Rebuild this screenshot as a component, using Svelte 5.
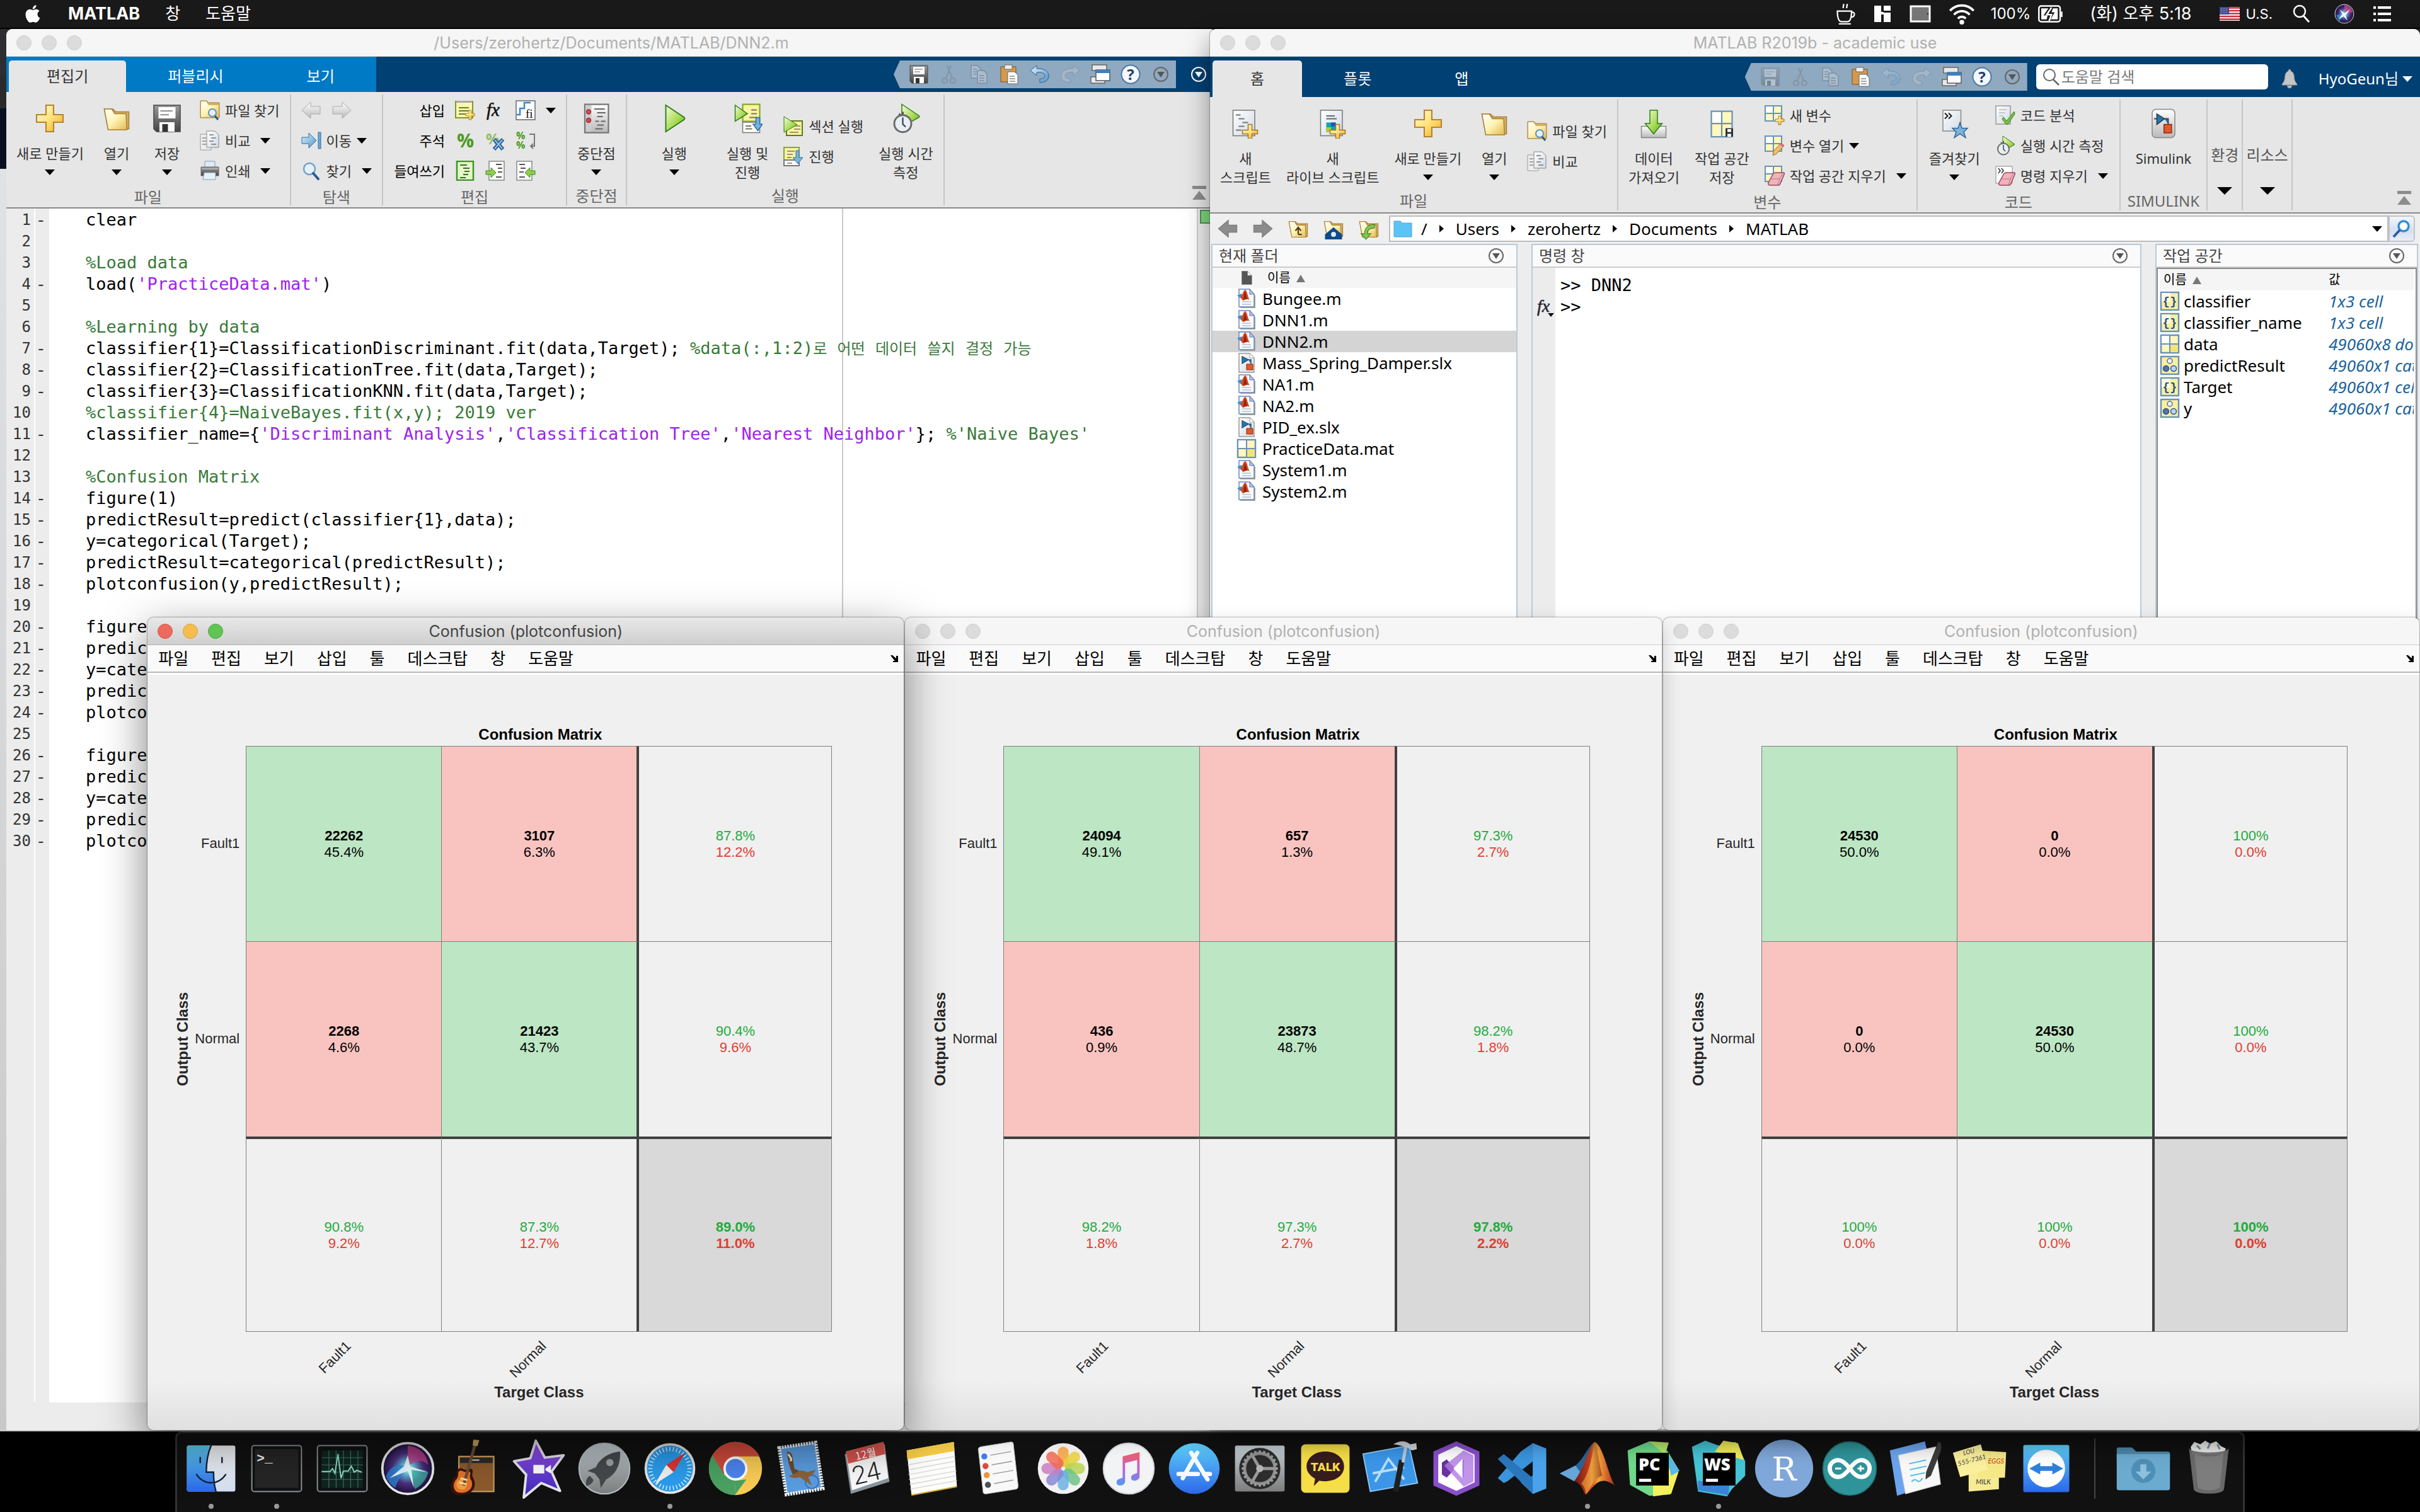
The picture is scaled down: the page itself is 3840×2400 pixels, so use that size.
<script>
  const source = [
    'clear',
    '',
    '%Load data',
    "load('PracticeData.mat')",
    '',
    '%Learning by data',
    'classifier{1}=ClassificationDiscriminant.fit(data,Target); %data(:,1:2)로 어떤 데이터 쓸지 결정 가능',
    'classifier{2}=ClassificationTree.fit(data,Target);',
    'classifier{3}=ClassificationKNN.fit(data,Target);',
    '%classifier{4}=NaiveBayes.fit(x,y); 2019 ver',
    "classifier_name={'Discriminant Analysis','Classification Tree','Nearest Neighbor'}; %'Naive Bayes'",
    '',
    '%Confusion Matrix',
    'figure(1)',
    'predictResult=predict(classifier{1},data);',
    'y=categorical(Target);',
    'predictResult=categorical(predictResult);',
    'plotconfusion(y,predictResult);',
    '',
    'figure(2)',
    'predictResult=predict(classifier{2},data);',
    'y=categorical(Target);',
    'predictResult=categorical(predictResult);',
    'plotconfusion(y,predictResult);',
    '',
    'figure(3)',
    'predictResult=predict(classifier{3},data);',
    'y=categorical(Target);',
    'predictResult=categorical(predictResult);',
    'plotconfusion(y,predictResult);'
  ];

  // Splits one line of MATLAB code into plain, string and comment runs.
  function tokens(line) {
    const out = [];
    for (const part of line.split(/('[^']*'|%.*)/)) {
      if (!part) continue;
      if (part[0] === '%') {
        for (const run of part.split(/([가-힣]+)/)) {
          if (run) out.push({ kind: /[가-힣]/.test(run) ? 'comment hangul' : 'comment', text: run });
        }
      } else if (part[0] === "'") out.push({ kind: 'string', text: part });
      else out.push({ kind: 'plain', text: part });
    }
    return out;
  }

  const code = source.map((line, i) => ({
    number: i + 1,
    runs: line !== '' && line[0] !== '%',
    parts: tokens(line)
  }));

  const files = [
    ['Bungee.m', 'mfile'], ['DNN1.m', 'mfile'], ['DNN2.m', 'mfile'], ['Mass_Spring_Damper.slx', 'slx'],
    ['NA1.m', 'mfile'], ['NA2.m', 'mfile'], ['PID_ex.slx', 'slx'], ['PracticeData.mat', 'matrix'],
    ['System1.m', 'mfile'], ['System2.m', 'mfile']
  ];

  const variables = [
    ['classifier', '1x3 cell', 'cell'], ['classifier_name', '1x3 cell', 'cell'], ['data', '49060x8 double', 'matrix'],
    ['predictResult', '49060x1 categorical', 'cat'], ['Target', '49060x1 cell', 'cell'], ['y', '49060x1 categorical', 'cat']
  ];

  const figures = [
    [[['22262', '45.4%'], ['3107', '6.3%'], ['87.8%', '12.2%']],
     [['2268', '4.6%'], ['21423', '43.7%'], ['90.4%', '9.6%']],
     [['90.8%', '9.2%'], ['87.3%', '12.7%'], ['89.0%', '11.0%']]],
    [[['24094', '49.1%'], ['657', '1.3%'], ['97.3%', '2.7%']],
     [['436', '0.9%'], ['23873', '48.7%'], ['98.2%', '1.8%']],
     [['98.2%', '1.8%'], ['97.3%', '2.7%'], ['97.8%', '2.2%']]],
    [[['24530', '50.0%'], ['0', '0.0%'], ['100%', '0.0%']],
     [['0', '0.0%'], ['24530', '50.0%'], ['100%', '0.0%']],
     [['100%', '0.0%'], ['100%', '0.0%'], ['100%', '0.0%']]]
  ];

  const classes = ['Fault1', 'Normal', ''];
  const figureMenus = ['파일', '편집', '보기', '삽입', '툴', '데스크탑', '창', '도움말'];

  function cellKind(r, c) {
    if (r === 2 && c === 2) return 'rate total';
    if (r === 2 || c === 2) return 'rate';
    return r === c ? 'hit' : 'miss';
  }

  const dock = [
    ['finder', true], ['terminal', true], ['activity'], ['siri'], ['garage'], ['imovie'], ['launchpad'], ['safari', true],
    ['chrome'], ['mail'], ['calendar'], ['notes'], ['reminders'], ['photos'], ['music'], ['appstore'], ['settings'],
    ['talk'], ['xcode'], ['vs'], ['vscode'], ['matlab', true], ['pycharm'], ['webstorm', true], ['rstudio'],
    ['arduino'], ['textedit'], ['stickies'], ['teamviewer']
  ];

  const quickEditor = [['save'], ['cut', 1], ['copy', 1], ['paste'], ['undo'], ['redo', 1], ['windows'], ['help'], ['circledown']];
  const quickMain = [['save', 1], ['cut', 1], ['copy', 1], ['paste'], ['undo', 1], ['redo', 1], ['windows'], ['help'], ['circledown']];
  const crumbs = ['Users', 'zerohertz', 'Documents', 'MATLAB'];
  const rays = Array.from({ length: 36 }, (_, i) => i * 10);
  const teeth = Array.from({ length: 24 }, (_, i) => i * 15);
  const petals = ['#f5a13c', '#e8d13a', '#b9d452', '#6dc487', '#6ab1e4', '#8c86d6', '#c77fc0', '#ee6a52'];
</script>

{#snippet ic(name, cls = 's32')}
  <svg class="ic {cls}" viewBox="0 0 32 32" aria-hidden="true"><use href="#{name}" /></svg>
{/snippet}

{#snippet dn()}
  <svg class="dn" viewBox="0 0 16 9" aria-hidden="true"><path d="M0 0h16L8 9z" /></svg>
{/snippet}

{#snippet big(icon, lines, arrow, cls = '')}
  <button class="big {cls}">
    {@render ic(icon, 's48')}
    {#each lines as l}<span>{l}</span>{/each}
    {#if arrow}<span class="drop">{@render dn()}</span>{/if}
  </button>
{/snippet}

{#snippet small(icon, text, arrow)}
  <button class="small">
    {@render ic(icon)}<span>{text}</span>
    {#if arrow}<span class={arrow}>{@render dn()}</span>{/if}
  </button>
{/snippet}

{#snippet lights(cls = '')}
  <div class="lights {cls}">
    <button aria-label="닫기"></button><button aria-label="최소화"></button><button aria-label="확대"></button>
  </div>
{/snippet}

{#snippet quick(items)}
  <div class="quick">
    {#each items as [name, off]}
      <button class={off ? 'off' : ''} disabled={!!off} aria-label={name}>{@render ic(name)}</button>
    {/each}
  </div>
{/snippet}

<svg class="sprite" aria-hidden="true">
  <defs>
    <linearGradient id="gold" x2="1" y2="1"><stop offset="0" stop-color="#fffbe0" /><stop offset=".5" stop-color="#ffe37a" /><stop offset="1" stop-color="#e8a92a" /></linearGradient>
    <linearGradient id="cream" x2="1" y2="1"><stop offset="0" stop-color="#fff" /><stop offset=".5" stop-color="#fdf3b4" /><stop offset="1" stop-color="#e3b951" /></linearGradient>
    <linearGradient id="lime" x2="1" y2="1"><stop offset="0" stop-color="#f4fcd8" /><stop offset=".6" stop-color="#a5d94e" /><stop offset="1" stop-color="#55a02a" /></linearGradient>
    <linearGradient id="sky" x2="1" y2="1"><stop offset="0" stop-color="#e3f1fb" /><stop offset="1" stop-color="#4b93c8" /></linearGradient>
    <linearGradient id="paper" x2="1" y2="1"><stop offset="0" stop-color="#fff" /><stop offset="1" stop-color="#cfdae4" /></linearGradient>
    <linearGradient id="steel" x2="0" y2="1"><stop offset="0" stop-color="#9a9a9a" /><stop offset="1" stop-color="#444" /></linearGradient>
    <linearGradient id="silver" x2="0" y2="1"><stop offset="0" stop-color="#fff" /><stop offset="1" stop-color="#b9b9b9" /></linearGradient>

    <path id="plus" d="M12 2h8v10h10v8H20v10h-8V20H2v-8h10z" fill="url(#gold)" stroke="#b9832a" stroke-width="1.4" />
    <g id="folder"><path d="M3 6h9l3 3h14v18H7z" fill="#d6b069" stroke="#a87f35" /><path d="M3 6h8l3 5h12l1 17H7z" fill="url(#cream)" stroke="#a87f35" /></g>
    <g id="save"><path d="M2 2h28v28H5l-3-3z" fill="url(#steel)" stroke="#444" /><path d="M7 4h18v12H7z" fill="#fff" /><path d="M9 8h13M9 12h9" stroke="#999" stroke-width="1.5" /><path d="M8 20h16v10H8z" fill="#fff" /><path d="M11 22h6v8h-6z" fill="#333" /></g>
    <g id="lens"><circle cx="13" cy="13" r="9" fill="#e4f1fa" fill-opacity=".9" stroke="#6fa3cc" stroke-width="2.5" /><path d="M19 20l8 9" stroke="#285a8c" stroke-width="4" stroke-linecap="round" /></g>
    <g id="findfiles"><path d="M1 1h10l3 3h17v24H1z" fill="#d9b264" stroke="#a87f35" /><path d="M2 2h8l4 6h16v19H2z" fill="url(#cream)" /><circle cx="20" cy="20" r="6" fill="#e4f1fa" stroke="#5b93c3" stroke-width="2" /><path d="M24 25l5 6" stroke="#285a8c" stroke-width="3" /></g>
    <g id="compare"><path d="M1 6h17v25H1z" fill="#eee" stroke="#999" /><path d="M4 12h6M4 17h6M4 22h6" stroke="#888" stroke-width="1.5" /><path d="M11 1h13l6 6v20H11z" fill="url(#paper)" stroke="#888" /><path d="M15 7h7M18 12h8M15 17h7M18 22h8" stroke="#777" stroke-width="1.5" /></g>
    <g id="print"><path d="M8 1h16v10H8z" fill="#dfeaf4" stroke="#7f9cb8" /><path d="M2 10h28v14H2z" fill="url(#steel)" stroke="#666" /><path d="M3 13h26" stroke="#ddd" /><path d="M7 19h18v11H5z" fill="#e6f1fa" stroke="#7f9cb8" /></g>
    <path id="left" d="M1 16L15 3v7h15v12H15v7z" fill="url(#silver)" stroke="#aaa" />
    <path id="right" d="M31 16L17 3v7H2v12h15v7z" fill="url(#silver)" stroke="#aaa" />
    <path id="backdark" d="M3 16L17 4v7h12v10H17v7z" fill="#8c8c8c" stroke="#7a7a7a" />
    <path id="fwddark" d="M29 16L15 4v7H3v10h12v7z" fill="#8c8c8c" stroke="#7a7a7a" />
    <g id="goto"><path d="M1 11h11V4l12 12-12 12v-7H1z" fill="url(#sky)" stroke="#2f6ea4" /><path d="M27 3h4v26h-4z" fill="#6fa9d6" stroke="#2f6ea4" /></g>
    <g id="insert"><path d="M1 2h27v26H1z" fill="#fbf7b0" stroke="#7a9c2a" stroke-width="2" /><path d="M2 1h25v3H2z" fill="#a8a8a8" /><path d="M6 12h16M6 17h18M6 22h11" stroke="#6b7c2a" stroke-width="2" /><path d="M22 16h4v5h5v4h-5v6h-4v-6h-5v-4h5z" fill="url(#gold)" stroke="#b9832a" /></g>
    <text id="fx" x="2" y="25" font-family="Liberation Serif, serif" font-style="italic" font-size="29" fill="#111" stroke="#111" stroke-width=".6">fx</text>
    <g id="fi"><path d="M1 1h30v30H1z" fill="#fff" stroke="#667" stroke-width="1.5" /><path d="M2 23h5V13h7V4h10" stroke="#3b86d0" stroke-width="2.5" fill="none" /><text x="16" y="28" font-family="Liberation Serif, serif" font-size="19" fill="#111">fi</text></g>
    <text id="pct" x="3" y="27" font-family="Open Sans, sans-serif" font-weight="700" font-size="30" fill="#4b9a1e">%</text>
    <g id="pctx"><text x="1" y="22" font-family="Open Sans, sans-serif" font-weight="700" font-size="24" fill="#8fc06a">%</text><path d="M14 14l14 16M28 14L14 30" stroke="#2d5f9e" stroke-width="6" /><path d="M15 15l12 14M27 15L15 29" stroke="#8fc0e8" stroke-width="2" /></g>
    <g id="pctwrap" font-family="Open Sans, sans-serif" font-weight="700" font-size="16" fill="#4b9a1e"><text x="1" y="14">%</text><text x="1" y="29">%</text><path d="M22 6h8v19h-6m4-4l-4 4 4 4" fill="none" stroke="#777" stroke-width="2" /></g>
    <g id="smart"><path d="M3 1h26v30H3z" fill="#e3f7c8" stroke="#3f9427" stroke-width="2.5" /><path d="M8 7h11M13 12h10M15 17h8M13 22h8M8 27h9" stroke="#446a2a" stroke-width="2" /></g>
    <g id="indent"><path d="M6 1h24v30H6z" fill="#fff" stroke="#888" stroke-width="1.5" /><path d="M17 6h9M20 12h7M20 18h7M17 26h9" stroke="#555" stroke-width="2" /><path d="M1 16h8v-5l8 8-8 8v-5H1z" fill="#8fce4a" stroke="#3c8a20" /></g>
    <g id="outdent"><path d="M2 1h24v30H2z" fill="#fff" stroke="#888" stroke-width="1.5" /><path d="M6 6h9M8 12h8M6 18h7M6 26h9" stroke="#555" stroke-width="2" /><path d="M31 16h-8v-5l-8 8 8 8v-5h8z" fill="#8fce4a" stroke="#3c8a20" /></g>
    <g id="break"><path d="M4 1h25v30H4z" fill="url(#silver)" stroke="#777" stroke-width="1.5" /><path d="M5 2h6v28H5z" fill="#ccc" /><circle cx="8" cy="9" r="2.3" fill="#d94b52" stroke="#9e2a30" /><circle cx="8" cy="18" r="2.3" fill="#d94b52" stroke="#9e2a30" /><path d="M14 6h11M17 10h9M17 14h6M15 19h4M21 19h5M17 23h7M15 27h8" stroke="#666" stroke-width="1.3" /></g>
    <path id="run" d="M7 2l19 12.500q2 1.500 0 3L7 30z" fill="url(#lime)" stroke="#2e7d1e" stroke-width="1.300" />
    <g id="runadv"><path d="M11 1h18v18H11z" fill="#fbf3a0" stroke="#86a82c" stroke-width="1.500" /><path d="M11 20h18v11H11z" fill="#fff" stroke="#777" /><path d="M20 7h6M20 11h6M18 15h8M14 24h6M14 27h7" stroke="#776" stroke-width="1.300" /><path d="M3 2l13 9L3 19z" fill="url(#lime)" stroke="#2e7d1e" /><path d="M25 15h4v7h3l-5 7-5-7h3z" fill="#77b3e0" stroke="#2f6ea4" /></g>
    <g id="runsec"><path d="M5 8h25v23H5z" fill="#fbf3a0" stroke="#5f7a1c" stroke-width="2" /><path d="M17 16h10M17 21h10M10 26h14" stroke="#776" stroke-width="1.500" /><path d="M1 1l21 13L1 26z" fill="url(#lime)" stroke="#2e7d1e" /></g>
    <g id="adv"><path d="M1 2h24v20H1z" fill="#fbf3a0" stroke="#86a82c" stroke-width="2" /><path d="M1 22h24v9H1z" fill="#fff" stroke="#777" stroke-width="2" /><path d="M6 8h12M6 13h9M6 18h7M6 27h8" stroke="#776" stroke-width="1.500" /><path d="M20 7h5v11h6l-8 10-8-10h5z" fill="#77b3e0" stroke="#2f6ea4" /></g>
    <g id="runtime"><path d="M12 1l18 12q1 1 0 2L12 25z" fill="url(#lime)" stroke="#2e7d1e" /><path d="M13 9v3M9 11l2 2" stroke="#555" stroke-width="2" /><circle cx="13" cy="21.500" r="9" fill="#e9eef2" stroke="#6b6b6b" stroke-width="2" /><path d="M13 15v7l3 3" fill="none" stroke="#345" stroke-width="1.500" /></g>
    <g id="cut" fill="none" stroke="#666" stroke-width="2"><path d="M19 2L11 22M13 2l8 20" /><circle cx="9" cy="26" r="4" /><circle cx="22" cy="26" r="4" /></g>
    <g id="copy" stroke="#555" stroke-width="1.500" fill="#e8edf2"><path d="M3 2h10l5 5v15H3z" /><path d="M13 10h10l5 5v15H13z" /><path d="M6 8h6M6 12h6M6 16h6M16 18h8M16 22h8M16 26h8" /></g>
    <g id="paste"><path d="M2 4h24v24H2z" fill="#d39a4e" stroke="#7a5320" /><path d="M8 1h12v7H8z" fill="#eee" stroke="#666" /><path d="M13 12h11l5 5v14H13z" fill="#fff" stroke="#666" /><path d="M16 19h8M16 23h9M16 27h9" stroke="#888" stroke-width="1.500" /></g>
    <path id="undo" d="M1 10L11 2v5c14-1 20 6 19 13-1 6-6 9-14 9v-6c6 0 8-2 8-5 0-4-5-6-13-5v5z" fill="url(#sky)" stroke="#2a6298" />
    <path id="redo" d="M31 10L21 2v5C7 6 1 13 2 20c1 6 6 9 14 9v-6c-6 0-8-2-8-5 0-4 5-6 13-5v5z" fill="#cfd8e0" stroke="#666" />
    <g id="windows"><path d="M3 1h23v9H3zM1 20h22v10H1z" fill="#e9e9e9" stroke="#666" stroke-width="1.500" /><path d="M9 9h22v17H9z" fill="#fff" stroke="#556" stroke-width="1.500" /><path d="M9 9h22v5H9z" fill="#3d80c4" /></g>
    <g id="help"><circle cx="16" cy="16" r="14.500" fill="#f4f8fc" stroke="#4b78a4" stroke-width="2" /><text x="16" y="25" text-anchor="middle" font-family="Open Sans, sans-serif" font-weight="700" font-size="24" fill="#1f3f66">?</text></g>
    <g id="circledown"><circle cx="16" cy="16" r="11" fill="none" stroke="#666" stroke-width="2" /><path d="M10 12h12l-6 9z" fill="#555" /></g>
    <g id="circlewhite"><circle cx="16" cy="16" r="11" fill="none" stroke="#fff" stroke-width="2" /><path d="M10 12h12l-6 9z" fill="#fff" /></g>
    <g id="newscript"><path d="M3 2h23v27H3z" fill="url(#paper)" stroke="#777" /><path d="M6 7h5M9 11h6M13 15h6M9 19h6M6 23h6" stroke="#777" stroke-width="1.200" /><path d="M19 17h4v6h6v4h-6v5h-4v-5h-6v-4h6z" fill="url(#gold)" stroke="#a8762a" /></g>
    <g id="newlive"><path d="M3 2h23v27H3z" fill="url(#paper)" stroke="#777" /><path d="M9 8h9M9 11h11" stroke="#666" stroke-width="1.200" /><path d="M9 15h10v10H9z" fill="#12a5a8" /><path d="M14 15h5v4h-5z" fill="#1b55c8" /><path d="M9 20h5v5H9z" fill="#b7c934" /><path d="M19 17h4v6h6v4h-6v5h-4v-5h-6v-4h6z" fill="url(#gold)" stroke="#a8762a" /></g>
    <g id="import"><path d="M3 19h26v12H3z" fill="url(#silver)" stroke="#888" /><path d="M12 2h8v14h5l-9 11-9-11h5z" fill="url(#lime)" stroke="#2e7d1e" /></g>
    <g id="matrix"><path d="M2 2h28v28H2z" fill="#fff7bd" stroke="#6993b5" stroke-width="2.500" /><path d="M3 3h13v13H3z" fill="#fff" /><path d="M16 16h13v13H16z" fill="#f7e17a" /><path d="M16 2v28M2 16h28" stroke="#6993b5" stroke-width="2" /></g>
    <g id="savews"><path d="M5 3h22v27H5z" fill="#fff7bd" stroke="#6993b5" stroke-width="1.500" /><path d="M6 4h10v12H6z" fill="#fff" /><path d="M16 3v27M5 16h22" stroke="#6993b5" stroke-width="1.500" /><path d="M20 21h8v9h-8z" fill="#333" /><path d="M22 22h4v3h-4zM22 27h4v3h-4z" fill="#fff" /></g>
    <g id="grid4"><path d="M1 1h26v24H1z" fill="#fff7bd" stroke="#6993b5" stroke-width="2" /><path d="M2 2h12v11H2z" fill="#fff" /><path d="M14 1v24M1 13h26" stroke="#6993b5" stroke-width="2" /></g>
    <g id="newvar"><use href="#grid4" /><path d="M22 17h4v5h5v4h-5v5h-4v-5h-5v-4h5z" fill="url(#gold)" stroke="#a8762a" /></g>
    <g id="openvar"><use href="#grid4" /><path d="M26 12l5 4-12 13-6 3 1-7z" fill="#f0bd6a" stroke="#a0692a" /><path d="M26 12l5 4-2 3-5-5z" fill="#d96a80" /></g>
    <g id="eraser"><path d="M18 11h12q2 0 1 3l-6 14q-1 3-3 3H8q-3 0-2-4l7-13q1-3 5-3z" fill="#eeb3bd" stroke="#9c4a5a" stroke-width="1.500" /><path d="M10 21h14l5-9M24 21l-3 9" fill="none" stroke="#c0707f" /></g>
    <g id="clearws"><use href="#grid4" /><use href="#eraser" /></g>
    <g id="cmdclear"><path d="M1 1h26v27H1z" fill="#fff" stroke="#888" /><path d="M5 4l3 4-3 4M10 4l3 4-3 4" stroke="#333" fill="none" stroke-width="1.500" /><use href="#eraser" /></g>
    <g id="fav"><path d="M4 2h19v22H4z" fill="url(#paper)" stroke="#888" /><path d="M6 5l3 3-3 3M10 5l3 3-3 3" stroke="#222" fill="none" stroke-width="1.400" /><path d="M22 15l2 6h6l-4 4 2 6-6-4-6 4 2-6-4-4h6z" fill="#7db4dd" stroke="#2f6797" /></g>
    <g id="analyze"><path d="M1 1h23v29H1z" fill="url(#paper)" stroke="#999" stroke-width="1.500" /><path d="M6 7h12M6 12h9M6 17h7" stroke="#bbb" stroke-width="1.500" /><path d="M13 19l5 6L30 10l1 4-11 16h-3l-6-8z" fill="#7cc043" stroke="#2f7a1c" /></g>
    <g id="simulink"><rect x="4" y="1" width="24" height="30" rx="4" fill="url(#silver)" stroke="#888" /><path d="M9 6l8 5-8 6zM6 11h3M17 11h4v6" fill="#1f7ab8" stroke="#345" stroke-width="1.200" /><path d="M16.500 17h8v9h-8z" fill="#e2592a" stroke="#8f2a10" /></g>
    <path id="bell" d="M16 1q2 0 2 3c6 2 5 9 6 14 1 4 4 5 4 8H4c0-3 3-4 4-8 1-5 0-12 6-14q0-3 2-3zM12 27h8q-1 4-4 4t-4-4z" fill="#c4c4c4" stroke="#8f8f8f" />
    <g id="upfolder"><use href="#folder" /><path d="M16 24V15m-4 4l4-5 4 5M16 24h5" fill="none" stroke="#543a1a" stroke-width="2" /></g>
    <g id="homefolder"><use href="#folder" /><path d="M16 14l12 10v7H4v-7z" fill="#0d4a8a" /><circle cx="16" cy="24" r="3.500" fill="#dfeaf5" /></g>
    <g id="cyclefolder"><use href="#folder" /><path d="M24 10c-8 0-14 4-14 13H5l7 8 7-8h-5c0-5 3-8 10-8z" fill="#86c650" stroke="#3b8226" /></g>
    <path id="bluefolder" d="M2 4h10l3 3h15v22H2z" fill="#5cc4f5" stroke="#45a7da" />
    <g id="search"><circle cx="13" cy="13" r="9" fill="none" stroke="#666" stroke-width="2" /><path d="M19 20l9 9" stroke="#666" stroke-width="2.500" /></g>
    <g id="bluelens"><circle cx="19" cy="12" r="8" fill="#fff" stroke="#2f8fd0" stroke-width="3.500" /><path d="M13 18L3 29" stroke="#2a5aa8" stroke-width="4" /></g>
    <g id="mfile"><path d="M6 3h16l8 8v20H6z" fill="#a9a78f" /><path d="M4 1h17l7 8v20H4z" fill="#f7fbff" stroke="#6a86c4" stroke-width="1.500" /><path d="M21 1v8h7z" fill="#b9c6ea" stroke="#6a6fae" /><path d="M9 21h14M9 25h14" stroke="#b7bdc6" stroke-width="1.500" /><path d="M1 11l7-3 3 6-5 1z" fill="#3f8fce" /><path d="M6 14c3-2 5-12 8-12 3 1 4 12 7 16-5-3-8 1-11 1z" fill="#d9481c" /><path d="M13 4c2 3 3 10 4 13-3-1-5 0-6 1z" fill="#8f2313" /></g>
    <g id="slx"><path d="M4 1h17l7 7v23H4z" fill="url(#paper)" stroke="#999" stroke-width="1.500" /><path d="M21 1v7h7z" fill="#fff" stroke="#aaa" /><path d="M9 6l10 5-10 6zM19 11h4v7" fill="#1f7ab8" stroke="#357" stroke-width="1.500" /><path d="M16 18h10v9H16z" fill="#e2592a" stroke="#8f2a10" /></g>
    <g id="cell"><path d="M2 2h28v28H2z" fill="#fbf0a0" stroke="#6993b5" stroke-width="2.500" /><path d="M3 3h14v14H3z" fill="#fffbe0" /><text x="16" y="22" text-anchor="middle" font-family="Liberation Mono, monospace" font-weight="700" font-size="19" fill="#2b4f86">&#123;&#125;</text></g>
    <g id="cat"><path d="M2 2h28v28H2z" fill="#fbf0a0" stroke="#6993b5" stroke-width="2.500" /><circle cx="16" cy="9" r="4" fill="#eef4fb" stroke="#4b6ea4" stroke-width="1.500" /><circle cx="10" cy="21" r="4.500" fill="#5272a8" stroke="#34558f" stroke-width="1.500" /><circle cx="22" cy="21" r="4.500" fill="#b9d3f2" stroke="#34558f" stroke-width="1.500" /></g>
    <path id="docdark" d="M6 2h12l9 9v19H6zM18 2v9h9" fill="#555" stroke="#777" />
    <g id="cmdfx"><text x="1" y="22" font-family="Liberation Serif, serif" font-style="italic" font-size="28" fill="#223" stroke="#223" stroke-width=".5">fx</text><path d="M18 24h10l-5 6z" fill="#111" /></g>

    <path id="apple" transform="translate(2 2) scale(1.160)" fill="#fff" d="M12.152 6.896c-.948 0-2.415-1.078-3.960-1.040-2.040.027-3.910 1.183-4.961 3.014-2.117 3.675-.546 9.103 1.519 12.090 1.013 1.454 2.208 3.090 3.792 3.039 1.520-.065 2.090-.987 3.935-.987 1.831 0 2.350.987 3.960.948 1.637-.026 2.676-1.480 3.676-2.948 1.156-1.688 1.636-3.325 1.662-3.415-.039-.013-3.182-1.221-3.220-4.857-.026-3.040 2.480-4.494 2.597-4.559-1.429-2.090-3.623-2.324-4.390-2.376-2-.156-3.675 1.090-4.610 1.090zM15.530 3.830c.843-1.012 1.400-2.427 1.245-3.830-1.207.052-2.662.805-3.532 1.818-.780.896-1.454 2.338-1.273 3.714 1.338.104 2.715-.688 3.559-1.701" />
    <g id="cup" fill="none" stroke="#fff" stroke-width="2"><path d="M4 12h20c0 9-2 15-6 15h-8c-4 0-6-6-6-15zM24 14c5-2 6 6-1 7M6 30h17M12 8l1-6M17 8l1-6" /></g>
    <path id="tiles" d="M3 3h11v26H3zM18 3h11v8H18zM18 14h11v15H18zM14 13h4v4h-4z" fill="#fff" />
    <g id="tablet"><path d="M1 4h30v24H1z" fill="#777" stroke="#fff" stroke-width="3" /><circle cx="28" cy="16" r="1" fill="#000" /></g>
    <g id="wifi" fill="none" stroke="#fff" stroke-width="3"><path d="M1 12c8-9 22-9 30 0M6 17c6-6 14-6 20 0M11 22c3-3 7-3 10 0" /><circle cx="16" cy="26.500" r="1.500" fill="#fff" /></g>
    <g id="battery"><rect x="1" y="6" width="27" height="20" rx="3" fill="none" stroke="#fff" stroke-width="2" /><path d="M4 9h9L7 18h5l-1 5H4zM19 9h6v14h-9l5-9h-4z" fill="#fff" /><path d="M17 8l-6 9h6l-3 8" fill="none" stroke="#fff" stroke-width="2" /><path d="M30 13v7" stroke="#fff" stroke-width="2" /></g>
    <g id="flag"><path d="M0 5h32v22H0z" fill="#fff" /><path d="M0 6.500h32M0 11h32M0 15.500h32M0 20h32M0 24.500h32" stroke="#c8303c" stroke-width="2.400" /><path d="M0 5h15v12H0z" fill="#3d4a8c" /><path d="M2 8h12M2 11h12M2 14h12" stroke="#fff" stroke-dasharray="1 2" /></g>
    <g id="searchwhite"><circle cx="13" cy="12" r="9" fill="none" stroke="#fff" stroke-width="2.500" /><path d="M19 19l9 10" stroke="#fff" stroke-width="3" /></g>
    <radialGradient id="orb"><stop offset="0" stop-color="#e9fbff" /><stop offset=".25" stop-color="#5fb7d8" /><stop offset=".6" stop-color="#4b2f7d" /><stop offset="1" stop-color="#1a1038" /></radialGradient>
    <g id="sirismall"><circle cx="16" cy="16" r="15" fill="url(#orb)" stroke="#ddd" /><path d="M16 2c8 0 13 6 13 12l-13 2z" fill="#d0508f" fill-opacity=".7" /><path d="M3 18l13-2-8 12z" fill="#2fa0e0" fill-opacity=".8" /><path d="M8 9l8 6 9-6-7 9 3 9-6-7-8 4 6-8z" fill="#eaffff" /></g>
    <path id="list" d="M2 4h4v4H2zM9 4h21v4H9zM2 14h4v4H2zM9 14h21v4H9zM2 24h4v4H2zM9 24h21v4H9z" fill="#fff" />

    <linearGradient id="dBlue" x2="0" y2="1"><stop offset="0" stop-color="#5fd0f8" /><stop offset="1" stop-color="#2b68ea" /></linearGradient>
    <linearGradient id="dLight" x2="0" y2="1"><stop offset="0" stop-color="#fafafa" /><stop offset="1" stop-color="#d3dff0" /></linearGradient>
    <linearGradient id="dGray" x2="0" y2="1"><stop offset="0" stop-color="#c8d3d9" /><stop offset="1" stop-color="#7d7d7d" /></linearGradient>
    <linearGradient id="dPurple" x2="0" y2="1"><stop offset="0" stop-color="#a050f0" /><stop offset="1" stop-color="#3a2ab8" /></linearGradient>
    <linearGradient id="dMusic" x2="0" y2="1"><stop offset="0" stop-color="#f0605a" /><stop offset=".5" stop-color="#c060d8" /><stop offset="1" stop-color="#4d9cf8" /></linearGradient>
    <linearGradient id="dFlame" x2="1" y2="0"><stop offset="0" stop-color="#6a1a12" /><stop offset=".4" stop-color="#c8401e" /><stop offset=".6" stop-color="#f5a53c" /><stop offset="1" stop-color="#b02a1a" /></linearGradient>
    <linearGradient id="dBurst"><stop offset="0" stop-color="#e88a2e" /><stop offset=".5" stop-color="#f7c04a" /><stop offset="1" stop-color="#7a2414" /></linearGradient>

    <g id="finder"><rect x="10" y="12" width="80" height="76" rx="3" fill="url(#dLight)" /><path d="M13 12h37c-6 14-8 28-8 44h12c0 12 1 22 4 32H13q-3 0-3-3V15q0-3 3-3z" fill="url(#dBlue)" /><path d="M32 32v8M68 32v8M26 60c12 18 36 18 48 0M50 12c-6 14-8 28-8 44h12c0 12 1 22 4 32" fill="none" stroke="#14233c" stroke-width="2.500" stroke-linecap="round" /></g>
    <g id="terminal"><rect x="9" y="12" width="82" height="76" rx="4" fill="#111" stroke="#8b969c" stroke-width="2" /><path d="M14 18h72v64H14z" fill="#262626" /><text x="17" y="40" font-family="Liberation Mono, monospace" font-weight="700" font-size="22" fill="#fff">&gt;_</text></g>
    <g id="activity"><rect x="9" y="12" width="82" height="76" rx="4" fill="#111" stroke="#8b969c" stroke-width="2" /><path d="M16 20h68v62H16z" fill="#10251f" /><path d="M16 32h68M16 44h68M16 56h68M16 68h68M28 20v62M40 20v62M52 20v62M64 20v62M76 20v62" stroke="#3f7467" stroke-width="1.200" /><path d="M16 55h14l4-5 4 8 5-32 5 40 4-12 8 0 5-8 5 10 4-3 8 3" fill="none" stroke="#8fe0c8" stroke-width="2" /></g>
    <g id="siri"><circle cx="50" cy="50" r="42" fill="url(#orb)" stroke="#e8e8e8" stroke-width="4" /><path d="M50 12c20 2 32 15 34 32-10-10-20-8-34 2z" fill="#c53f86" fill-opacity=".75" /><path d="M14 62c10-20 22-20 36-14C38 62 30 76 30 82 22 78 16 70 14 62z" fill="#2a88d8" fill-opacity=".75" /><path d="M50 48c14 4 24 2 34 8-4 14-12 22-22 28-4-10-6-24-12-36z" fill="#3fc8a8" fill-opacity=".65" /><path d="M20 66l24-20 6-18 4 18 28 10-26-4 4 30-10-28z" fill="#f0ffff" fill-opacity=".9" /></g>
    <g id="garage"><path d="M26 30h58v58H26z" fill="#8c5a2c" stroke="#d2a566" stroke-width="2" /><path d="M28 32h54v9H28z" fill="#2b2b2b" /><path d="M46 36h14" stroke="#ddd" stroke-width="2" /><path d="M22 56q2-8 10-6 4 4 10 0 8-1 7 6-2 6 2 12 4 10-2 18-6 8-20 8T14 84q-4-10 4-18 5-4 4-10z" fill="#3b130a" /><path d="M25 57q2-5 7-3 4 3 9 1 5 0 4 4-2 6 2 11 3 8-2 14-5 6-15 6T18 82q-2-8 4-14 4-5 3-11z" fill="#e0732a" /><circle cx="31" cy="76" r="9" fill="#f5b04a" fill-opacity=".7" /><path d="M34 78L53 10" stroke="#6b4a35" stroke-width="5" /><path d="M50 2l10 1-3 10-8-1z" fill="#c7a560" /><path d="M29 66l11 3M27 73l11 3" stroke="#f3dfa0" stroke-width="3" /></g>
    <g id="imovie"><path d="M45 4l15 28 31-4-20 27 14 32-31-13-29 24 4-38L9 38l27-5z" fill="url(#dPurple)" stroke="#e6e6ee" stroke-width="4" stroke-linejoin="round" /><path d="M41 44h18v14H41zM61 50l9-6v14l-9-5z" fill="#fff" /></g>
    <g id="launchpad"><circle cx="50" cy="50" r="42" fill="url(#dGray)" stroke="#b4c3c7" stroke-width="2" /><path d="M76 22c-20 2-34 12-40 26l-14 6 12 4 8 10 2 14 9-14c16-8 24-24 23-46zM26 62c-6 4-7 9-6 17 6-2 10-4 12-10z" fill="#46494b" /><circle cx="59" cy="40" r="6" fill="#9aa2a5" /></g>
    <g id="safari"><circle cx="50" cy="50" r="42" fill="#e6e6e6" /><circle cx="50" cy="50" r="38" fill="#2a9cec" />{#each rays as a}<path d="M50 14v7" stroke="#e3f2fd" stroke-width="1.500" transform="rotate({a} 50 50)" />{/each}<path d="M75 24L56 56 44 44z" fill="#e0352f" /><path d="M25 76l19-32 12 12z" fill="#f2f2f2" /></g>
    <g id="chrome"><circle cx="50" cy="50" r="44" fill="#f9cc55" /><path d="M50 6a44 44 0 0 1 40 24H50L30 60 12 28A44 44 0 0 1 50 6z" fill="#cf4a3d" /><path d="M12 28l20 33 18 9-1 24A44 44 0 0 1 12 28z" fill="#4aa262" /><path d="M50 70l18-2-19 26z" fill="#4aa262" /><circle cx="50" cy="50" r="20" fill="#fff" /><circle cx="50" cy="50" r="16" fill="#4c84ee" /></g>
    <g id="mail"><path d="M14 16l60-9 12 76-60 10z" fill="#4e93dc" stroke="#f4f4f4" stroke-width="6" stroke-dasharray="3 1.500" /><path d="M17 18l55-8 10 71-54 8z" fill="#5a9de0" /><circle cx="68" cy="72" r="11" fill="none" stroke="#3d74b4" stroke-width="2" /><path d="M27 22q7 0 9 8l3 20 8 4 3 8q-8 2-14-3-8-16-9-37z" fill="#6b4a30" /><path d="M46 54q8-2 14 2l14-4q-4 10-12 12l6 14-12-8-8-6q-12 4-18-2 10-2 16-8z" fill="#8a6238" /><path d="M29 26l5 8-1 4" stroke="#efe8dc" stroke-width="3" fill="none" /></g>
    <g id="calendar"><path d="M14 26l66-16 8 62-64 20z" fill="#8b979e" /><path d="M16 22l62-16 8 60-60 20z" fill="#fafafa" /><path d="M16 22l62-16 3 20-61 16z" fill="#d9544c" /><text x="50" y="32" transform="rotate(-13 50 32)" text-anchor="middle" font-family="Noto Sans CJK KR, sans-serif" font-size="17" fill="#fff">12월</text><text x="53" y="72" transform="rotate(-13 53 72)" text-anchor="middle" font-family="Roboto, sans-serif" font-weight="300" font-size="42" fill="#222">24</text></g>
    <g id="notes"><path d="M8 20l78-14 5 74-75 14z" fill="#fdfdfb" /><path d="M8 20l78-14 1 15L9 35z" fill="#f6cc46" /><path d="M10 44l78-14M11 52l77-14M11 60l78-14M12 68l78-14M13 76l77-14M14 84l77-14" stroke="#d8d8d8" stroke-width="1.500" /><path d="M16 94l75-14" stroke="#d6a92c" stroke-width="2" /></g>
    <g id="reminders"><path d="M18 18q0-3 4-4l50-8q4 0 4 3l8 70q0 4-3 5l-50 8q-5 0-5-3z" fill="#f8f8f8" stroke="#b9b9b9" /><circle cx="28" cy="30" r="5" fill="#3f7df0" /><circle cx="30" cy="46" r="5" fill="#dc4a3c" /><circle cx="32" cy="61" r="5" fill="#e8983c" /><circle cx="34" cy="77" r="5" fill="#4a5258" /><path d="M38 28l34-6M40 44l34-6M42 59l34-6M44 75l32-6" stroke="#999" stroke-width="1.500" /></g>
    <g id="photos"><circle cx="50" cy="50" r="42" fill="#f3f1f1" />{#each petals as p, i}<rect x="41" y="14" width="18" height="33" rx="9" fill={p} fill-opacity=".85" transform="rotate({i * 45} 50 50)" />{/each}</g>
    <g id="music"><circle cx="50" cy="50" r="42" fill="#f1f3f5" stroke="#cfd3d8" stroke-width="2" /><path d="M40 30l28-7v40c0 8-14 10-14 2 0-6 8-6 10-8V36l-20 5v30c0 8-14 10-14 2 0-7 8-6 10-8z" fill="url(#dMusic)" /></g>
    <g id="appstore"><circle cx="50" cy="50" r="42" fill="url(#dBlue)" /><path d="M45 24l27 44M55 24L31 66M24 59h32M66 59h10" stroke="#f5faff" stroke-width="7" stroke-linecap="round" /></g>
    <g id="settings"><rect x="9" y="12" width="82" height="76" rx="3" fill="url(#dGray)" /><circle cx="50" cy="50" r="34" fill="#2c2c2c" /><circle cx="50" cy="50" r="25" fill="none" stroke="#8d8d8d" stroke-width="5" />{#each teeth as a}<path d="M50 20v5" stroke="#9a9a9a" stroke-width="4" transform="rotate({a} 50 50)" />{/each}<path d="M50 50h24M50 50L38 29M50 50L38 71" stroke="#999" stroke-width="5" /><circle cx="50" cy="50" r="6" fill="#b5b5b5" /></g>
    <g id="talk"><rect x="10" y="10" width="80" height="80" rx="7" fill="#f6de46" /><path d="M50 22c18 0 31 11 31 25S68 71 50 71q-6 0-10-1L31 79l2-12c-8-5-14-11-14-20 0-14 13-25 31-25z" fill="#371c1d" /><text x="50" y="54" text-anchor="middle" font-family="Roboto, sans-serif" font-weight="900" font-size="20" fill="#f6de46">TALK</text></g>
    <g id="xcode"><path d="M4 26l76-14 14 62-78 14z" fill="#3b96e8" stroke="#8cc6f5" stroke-width="2" /><path d="M24 72l22-38 26 34M20 58l52-10" fill="none" stroke="#b9dcf8" stroke-width="4" /><path d="M68 36l-10 52" stroke="#1f1f1f" stroke-width="9" /><path d="M70 40l5-28" stroke="#c3c9cd" stroke-width="5" /><path d="M54 10q16-10 28 0l10-2 1 10-8 2-6-4q-10-4-25-6z" fill="#d5dadd" /></g>
    <g id="vs"><path d="M50 5l38 17v56L50 95 12 78V22z" fill="#8a4fcb" /><path d="M50 13l30 14v46L50 87 20 73V27z" fill="#fff" /><path d="M26 40l8-5 28 30V35L34 65l-8-5z" fill="#68339c" /><path d="M62 20l16 8v44l-16 8L30 45z" fill="#b17be5" fill-opacity=".8" /><path d="M60 34v32L45 50z" fill="#fff" /></g>
    <g id="vscode"><path d="M68 8l22 9v66l-22 9-20-19 20-11V38L26 71l-6 3-10-8 38-44z" fill="#3b94dd" /><path d="M10 34l10-8 48 40v26z" fill="#2a77be" /><path d="M68 8l22 9v66l-22 9z" fill="#4aa3ea" /></g>
    <g id="matlab"><path d="M4 58l26-13 16 12-18 14z" fill="#67a6d8" /><path d="M30 45c12-8 22-34 32-39L44 64z" fill="#2b6396" /><path d="M62 6C52 14 46 48 28 71c10 2 14 12 18 22C58 88 66 56 95 78 84 60 76 12 62 6z" fill="url(#dFlame)" /><path d="M62 6c6 20 8 38 12 56-12 4-18 18-26 31-2-8-2-12-8-18 14-18 18-50 22-69z" fill="url(#dBurst)" fill-opacity=".7" /></g>
    <g id="pycharm"><path d="M8 20L44 5l30 16 18 30-14 42-34 2-32-18z" fill="#6fd98a" /><path d="M50 40l42 16-12 36-30 4z" fill="#f4f25c" /><path d="M70 20l24 34-14 8z" fill="#5ab9e8" /><path d="M44 5l32 2-6 20z" fill="#b9e86a" /><path d="M22 24h54v54H22z" fill="#000" /><text x="26" y="53" font-family="Open Sans, sans-serif" font-weight="800" font-size="28" fill="#fff">PC</text><path d="M27 67h20v5H27z" fill="#fff" /></g>
    <g id="webstorm"><path d="M6 14L28 4l22 8 28-6 16 32v24L72 84l-8 12L16 88z" fill="#45c4d4" /><path d="M58 4l24 4 10 28-48-14z" fill="#f3ee58" /><path d="M16 70l52 8-2 16-50-8z" fill="#3a84d8" /><path d="M24 24h54v54H24z" fill="#000" /><text x="26" y="53" font-family="Open Sans, sans-serif" font-weight="800" font-size="27" fill="#fff">WS</text><path d="M29 67h20v5H29z" fill="#fff" /></g>
    <g id="rstudio"><circle cx="50" cy="50" r="48" fill="#7fa7d9" /><text x="50" y="70" text-anchor="middle" font-family="DejaVu Serif, serif" font-size="54" fill="#fff">R</text></g>
    <g id="arduino"><circle cx="50" cy="50" r="44" fill="#2f9499" stroke="#24777c" stroke-width="2" /><path d="M50 50c-8-11-14-14-19-14a14 14 0 0 0 0 28c5 0 11-3 19-14s14-14 19-14a14 14 0 0 1 0 28c-5 0-11-3-19-14z" fill="none" stroke="#fff" stroke-width="7" /><path d="M26 50h10M63 50h11M68 45v10" stroke="#fff" stroke-width="3" /></g>
    <g id="textedit"><path d="M8 20l58-15 16 70-62 20z" fill="#6ba4ee" /><path d="M22 28l62-14 8 62-58 16z" fill="#f8f8f8" stroke="#ccc" /><path d="M40 42l28-6M41 52l28-6M42 62l24-5M44 72q5-6 9-2t9-4" fill="none" stroke="#4cbfe6" stroke-width="2" /><path d="M88 6q8 0 4 16L76 62l-9 6 1-12z" fill="#3c3c3c" /></g>
    <g id="stickies"><path d="M30 50h50v34l-50 4z" fill="#f7eb94" /><path d="M46 20l46 3-2 42-46 1z" fill="#f5e887" /><path d="M4 24l46-14 12 42-46 12z" fill="#f9ef9c" /><g font-family="Lato, sans-serif" font-style="italic"><text x="22" y="28" font-size="10" fill="#444" transform="rotate(-14 22 28)">LOU</text><text x="13" y="46" font-size="11" fill="#444" transform="rotate(-15 13 46)">555-7361</text><text x="62" y="42" font-size="11" fill="#c8402a">EGGS</text><text x="42" y="76" font-size="11" fill="#333">MILK</text></g></g>
    <g id="teamviewer"><rect x="12" y="11" width="76" height="78" rx="3" fill="url(#dBlue)" /><circle cx="50" cy="50" r="31" fill="#fff" /><path d="M22 50l18-10v6h20v-6l18 10-18 10v-6H40v6z" fill="#2f80dc" /></g>
    <g id="downloads"><path d="M6 18q0-3 3-3h22l7 7h52q4 0 4 3v10H6z" fill="#4c87a6" /><path d="M6 26h88v56q0 4-4 4H10q-4 0-4-4z" fill="#6cabd0" /><circle cx="50" cy="54" r="20" fill="#4f8eb6" /><path d="M45 43h10v12h8L50 68 37 55h8z" fill="#8cc0de" /></g>
    <g id="trash"><path d="M20 14l6-8 10 4 8-6 8 5 10-4 8 8 8 4-4 10H22z" fill="#e9e9e6" /><path d="M30 12l6 6M52 8l-4 9M64 10l4 8" stroke="#6a88a0" stroke-width="3" /><path d="M17 16c2 10 64 10 66 0l-8 68c-2 10-48 10-50 0z" fill="#6f6f6f" fill-opacity=".95" /><path d="M26 26c14 5 34 5 48 0l-6 56q-18 8-36 0z" fill="#8a8a8a" fill-opacity=".6" /></g>
  </defs>
</svg>

<div class="screen">
  <header class="menubar">
    <nav aria-label="메뉴">
      <button aria-label="Apple">{@render ic('apple')}</button>
      <button class="app">MATLAB</button>
      <button>창</button>
      <button>도움말</button>
    </nav>
    <div class="status">
      {@render ic('cup', 's36')}
      {@render ic('tiles', 's32')}
      {@render ic('tablet', 's40')}
      {@render ic('wifi', 's44')}
      <span class="battery">100% {@render ic('battery', 's48')}</span>
      <span class="clock">(화) 오후 5:18</span>
      <span class="input">{@render ic('flag')} U.S.</span>
      <button class="spot" aria-label="검색">{@render ic('searchwhite')}</button>
      {@render ic('sirismall', 's32')}
      {@render ic('list', 's40')}
    </div>
  </header>

  <main class="desktop">
    <section class="window editor">
      <div class="titlebar">{@render lights()}<h2>/Users/zerohertz/Documents/MATLAB/DNN2.m</h2></div>
      <div class="tabs">
        <div class="tabset context">
          <button class="tab active">편집기</button><button class="tab">퍼블리시</button><button class="tab">보기</button>
        </div>
        {@render quick(quickEditor)}
        <button class="more" aria-label="더 보기">{@render ic('circlewhite')}</button>
      </div>
      <div class="ribbon">
        <div class="group">
          <div class="tools">
            {@render big('plus', ['새로 만들기'], true)}
            {@render big('folder', ['열기'], true)}
            {@render big('save', ['저장'], true)}
            <div class="stack">
              {@render small('findfiles', '파일 찾기')}
              {@render small('compare', '비교', 'split')}
              {@render small('print', '인쇄', 'split')}
            </div>
          </div>
          <h3>파일</h3>
        </div>
        <div class="group">
          <div class="tools">
            <div class="stack">
              <div class="pair"><button aria-label="뒤로">{@render ic('left')}</button><button aria-label="앞으로">{@render ic('right')}</button></div>
              {@render small('goto', '이동', 'menu')}
              {@render small('lens', '찾기', 'split')}
            </div>
          </div>
          <h3>탐색</h3>
        </div>
        <div class="group">
          <div class="tools edit">
            <span>삽입</span>
            {#each ['insert', 'fx', 'fi'] as n}<button aria-label={n}>{@render ic(n)}</button>{/each}
            <button aria-label="삽입 메뉴">{@render dn()}</button>
            <span>주석</span>
            {#each ['pct', 'pctx', 'pctwrap'] as n}<button aria-label={n}>{@render ic(n)}</button>{/each}
            <i></i>
            <span>들여쓰기</span>
            {#each ['smart', 'indent', 'outdent'] as n}<button aria-label={n}>{@render ic(n)}</button>{/each}
          </div>
          <h3>편집</h3>
        </div>
        <div class="group">
          <div class="tools">{@render big('break', ['중단점'], true)}</div>
          <h3>중단점</h3>
        </div>
        <div class="group">
          <div class="tools">
            {@render big('run', ['실행'], true, 'wide')}
            {@render big('runadv', ['실행 및', '진행'])}
            <div class="stack mid">
              {@render small('runsec', '섹션 실행')}
              {@render small('adv', '진행')}
            </div>
            {@render big('runtime', ['실행 시간', '측정'])}
          </div>
          <h3>실행</h3>
        </div>
        <button class="collapse" aria-label="접기"><svg viewBox="0 0 22 22" aria-hidden="true"><path d="M0 0h22v5H0zM11 8l11 14H0z" /></svg></button>
      </div>
      <div class="codearea">
        <ol class="code">
          {#each code as line}
            <li>
              <span class="num">{line.number}</span><span class="dash">{line.runs ? '-' : ''}</span>
              <code>{#each line.parts as p}<span class={p.kind}>{p.text}</span>{/each}</code>
            </li>
          {/each}
        </ol>
        <div class="marks"><i></i></div>
      </div>
      <div class="statusbar"></div>
    </section>

    <section class="window matlab">
      <div class="titlebar">{@render lights()}<h2>MATLAB R2019b - academic use</h2></div>
      <div class="tabs tall">
        <div class="tabset">
          <button class="tab active">홈</button><button class="tab">플롯</button><button class="tab">앱</button>
        </div>
        {@render quick(quickMain)}
        <label class="help">{@render ic('search')}<input type="text" placeholder="도움말 검색" aria-label="도움말 검색" /></label>
        <button class="bell" aria-label="알림">{@render ic('bell')}</button>
        <button class="user">HyoGeun님 <svg class="dn light" viewBox="0 0 16 9" aria-hidden="true"><path d="M0 0h16L8 9z" /></svg></button>
      </div>
      <div class="ribbon">
        <div class="group">
          <div class="tools">
            {@render big('newscript', ['새', '스크립트'])}
            {@render big('newlive', ['새', '라이브 스크립트'])}
            {@render big('plus', ['새로 만들기'], true)}
            {@render big('folder', ['열기'], true)}
            <div class="stack mid">
              {@render small('findfiles', '파일 찾기')}
              {@render small('compare', '비교')}
            </div>
          </div>
          <h3>파일</h3>
        </div>
        <div class="group">
          <div class="tools">
            {@render big('import', ['데이터', '가져오기'])}
            {@render big('savews', ['작업 공간', '저장'])}
            <div class="stack">
              {@render small('newvar', '새 변수')}
              {@render small('openvar', '변수 열기', 'menu')}
              {@render small('clearws', '작업 공간 지우기', 'split')}
            </div>
          </div>
          <h3>변수</h3>
        </div>
        <div class="group">
          <div class="tools code-tools">
            {@render big('fav', ['즐겨찾기'], true)}
            <div class="stack">
              {@render small('analyze', '코드 분석')}
              {@render small('runtime', '실행 시간 측정')}
              {@render small('cmdclear', '명령 지우기', 'split')}
            </div>
          </div>
          <h3>코드</h3>
        </div>
        <div class="group">
          <div class="tools center">{@render big('simulink', ['Simulink'])}</div>
          <h3>SIMULINK</h3>
        </div>
        <button class="folded">환경<svg viewBox="0 0 24 12" aria-hidden="true"><path d="M0 0h24L12 12z" /></svg></button>
        <button class="folded">리소스<svg viewBox="0 0 24 12" aria-hidden="true"><path d="M0 0h24L12 12z" /></svg></button>
        <button class="collapse" aria-label="접기"><svg viewBox="0 0 22 22" aria-hidden="true"><path d="M0 0h22v5H0zM11 8l11 14H0z" /></svg></button>
      </div>
      <div class="address">
        {#each ['backdark', 'fwddark', 'upfolder', 'homefolder', 'cyclefolder'] as n}
          <button aria-label={n}>{@render ic(n, 's36')}</button>
        {/each}
        <div class="path">
          {@render ic('bluefolder')}
          <a href="#root">/</a>
          {#each crumbs as c}<svg class="sep" viewBox="0 0 7 12" aria-hidden="true"><path d="M0 0l7 6-7 6z" /></svg><a href="#{c}-folder">{c}</a>{/each}
          <button class="pick" aria-label="폴더 목록">{@render dn()}</button>
        </div>
        <button class="find" aria-label="폴더 검색">{@render ic('bluelens')}</button>
      </div>
      <div class="panels">
        <section class="panel">
          <header><h3>현재 폴더</h3><button aria-label="패널 메뉴">{@render ic('circledown')}</button></header>
          <table class="files">
            <thead><tr><th class="pic">{@render ic('docdark', 's24')}</th><th>이름 <svg class="up" viewBox="0 0 14 12" aria-hidden="true"><path d="M7 0l7 12H0z" /></svg></th></tr></thead>
            <tbody>
              {#each files as [name, icon]}
                <tr class:selected={name === 'DNN2.m'}><td class="pic">{@render ic(icon)}</td><td>{name}</td></tr>
              {/each}
            </tbody>
          </table>
        </section>
        <section class="panel">
          <header><h3>명령 창</h3><button aria-label="패널 메뉴">{@render ic('circledown')}</button></header>
          <div class="command">
            <div class="fxcol">{@render ic('cmdfx')}</div>
            <pre>&gt;&gt; DNN2
&gt;&gt; </pre>
          </div>
        </section>
        <section class="panel">
          <header><h3>작업 공간</h3><button aria-label="패널 메뉴">{@render ic('circledown')}</button></header>
          <div class="vars">
            <table>
              <colgroup><col class="c-icon" /><col class="c-name" /><col /></colgroup>
              <thead><tr><th colspan="2">이름 <svg class="up" viewBox="0 0 14 12" aria-hidden="true"><path d="M7 0l7 12H0z" /></svg></th><th class="val">값</th></tr></thead>
              <tbody>
                {#each variables as [name, value, icon]}
                  <tr><td>{@render ic(icon)}</td><td>{name}</td><td class="val">{value}</td></tr>
                {/each}
              </tbody>
            </table>
          </div>
        </section>
      </div>
    </section>

    <div class="figures">
      {#each figures as rows, f}
        <section class="window figure" class:front={f === 0} class:middle={f === 1}>
          <div class="titlebar">{@render lights(f === 0 ? 'on' : '')}<h2>Confusion (plotconfusion)</h2></div>
          <nav class="figmenu" aria-label="그림 메뉴">
            {#each figureMenus as m}<button>{m}</button>{/each}
            <svg viewBox="0 0 14 14" aria-hidden="true"><path d="M1 2h3l6 5V3h3v10H5v-2h3L3 5z" /></svg>
          </nav>
          <div class="plot">
            <h3>Confusion Matrix</h3>
            <div class="axes">
              <span class="ylabel">Output Class</span>
              <table class="matrix">
                <colgroup><col class="c-label" /><col /><col /><col /></colgroup>
                <tbody>
                  {#each rows as row, r}
                    <tr>
                      <th scope="row">{classes[r]}</th>
                      {#each row as [a, b], c}<td class={cellKind(r, c)}><b>{a}</b><span>{b}</span></td>{/each}
                    </tr>
                  {/each}
                </tbody>
                <tfoot>
                  <tr><td></td>{#each classes as c}<th scope="col"><div><span>{c}</span></div></th>{/each}</tr>
                </tfoot>
              </table>
            </div>
            <span class="xlabel">Target Class</span>
          </div>
        </section>
      {/each}
    </div>
  </main>

  <footer class="dockrow">
    <nav class="dock" aria-label="Dock">
      {#each dock as [name, open]}
        <button class:open aria-label={name}><svg viewBox="0 0 100 100" aria-hidden="true"><use href="#{name}" /></svg></button>
      {/each}
      <span class="rule"></span>
      {#each ['downloads', 'trash'] as name}
        <button aria-label={name}><svg viewBox="0 0 100 100" aria-hidden="true"><use href="#{name}" /></svg></button>
      {/each}
    </nav>
  </footer>
</div>

<style>
  :global(body) { margin: 0; background: #000; }
  * { box-sizing: border-box; }
  button { border: 0; padding: 0; margin: 0; background: none; color: inherit; font: inherit; line-height: inherit; white-space: nowrap; }
  h2, h3 { margin: 0; font-weight: 400; }
  svg { display: block; flex: none; }
  .sprite { position: absolute; width: 0; height: 0; }
  .s24 { width: 24px; height: 24px; }
  .s32 { width: 32px; height: 32px; }
  .s36 { width: 36px; height: 36px; }
  .s40 { width: 40px; height: 32px; }
  .s44 { width: 44px; height: 40px; }
  .s48 { width: 48px; height: 48px; }
  .dn { width: 16px; height: 9px; }
  .dn.light { fill: #fff; }

  .screen {
    min-height: 100vh;
    display: flex;
    flex-direction: column;
    overflow: hidden;
    font-family: 'Noto Sans', 'Noto Sans CJK KR', sans-serif;
    font-size: 22px;
    color: #000;
  }

  .menubar {
    display: flex;
    justify-content: space-between;
    height: 46px;
    padding: 0 40px 0 36px;
    border-bottom: 2px solid #000;
    background: #191919;
    color: #fff;
    font-family: Inter, 'Noto Sans CJK KR', sans-serif;
    font-size: 26px;
    line-height: 44px;
  }
  .menubar nav, .status, .status span { display: flex; align-items: center; }
  .menubar nav { gap: 40px; }
  .app { font-size: 27px; font-weight: 700; }
  .status { gap: 24px; font-size: 24px; }
  .status .battery { gap: 8px; }
  .status .battery .ic { height: 40px; }
  .status .clock { padding-left: 14px; font-size: 27px; }
  .status .input { padding: 0 6px 0 20px; gap: 10px; font-size: 22px; }
  .spot { padding-right: 12px; }

  .desktop {
    flex: 1;
    position: relative;
    background: linear-gradient(#2c2e31 74px, #2a2a2a 74px 126px, #0b1020 126px 222px, #dfe2e6 222px, #c8c8c8);
  }

  .window { display: flex; flex-direction: column; overflow: hidden; border-radius: 10px 10px 0 0; background: #f0f0f0; }
  .editor { position: absolute; left: 10px; width: 50%; top: 0; bottom: 2px; }
  .matlab { position: absolute; left: 50%; right: 0; top: 0; bottom: 2px; box-shadow: 0 16px 40px rgba(0, 0, 0, .4), 0 0 1px 1px rgba(0, 0, 0, .25); }
  .figures { position: absolute; left: 6.1%; right: 1px; top: 934px; bottom: 2px; display: grid; grid-template-columns: repeat(3, 1fr); gap: 2px; }

  .titlebar {
    display: grid;
    grid-template-columns: 1fr auto 1fr;
    align-items: center;
    height: 44px;
    flex: none;
    border-bottom: 1px solid #d0d0cc;
    background: #f6f6f6;
    color: #b0b0b0;
    font-family: Inter, sans-serif;
    line-height: 42px;
  }
  .titlebar h2 { font-size: 25px; }
  .lights { display: flex; gap: 16px; padding-left: 16px; }
  .lights button { width: 24px; height: 24px; border-radius: 50%; background: #dcdcdc; border: 1px solid #cfcfcf; }
  .lights.on button:nth-child(1) { background: #ee6a5f; border-color: #d5544a; }
  .lights.on button:nth-child(2) { background: #f5bd4f; border-color: #d9a13a; }
  .lights.on button:nth-child(3) { background: #61c454; border-color: #4fa73e; }

  .tabs { display: flex; flex: none; height: 56px; padding-top: 6px; background: #004073; color: #fff; font-size: 24px; line-height: 48px; }
  .tabs.tall { height: 64px; line-height: 56px; }
  .tabset { display: flex; padding-left: 4px; }
  .tabset.context { margin-top: -6px; padding-top: 6px; background: #007ac4; }
  .tab { padding: 0 66px; }
  .tab.active { padding: 0 60px; border-radius: 5px 5px 0 0; background: #e6e6e6; color: #333; }
  .quick {
    display: flex;
    align-items: center;
    gap: 16px;
    height: 44px;
    margin-left: auto;
    padding: 0 8px 0 24px;
    background: #8fa9c0;
    clip-path: polygon(10px 0, 100% 0, 100% 100%, 10px 100%, 0 50%);
  }
  .tall .quick { margin-top: 4px; }
  .quick .off { opacity: .3; }
  .more { padding: 0 12px 0 20px; height: 44px; }
  .tabs.tall .help { display: flex; align-items: center; width: 368px; height: 40px; margin: 6px 18px 0 14px; padding-left: 8px; border-radius: 6px; background: #fff; }
  .help input { flex: 1; min-width: 0; height: 36px; padding: 0; border: 0; outline: 0; background: none; font: inherit; line-height: 36px; color: #333; }
  .help input::placeholder { color: #7c7c7c; opacity: 1; }
  .bell { padding: 0 30px 0 0; }
  .user { display: flex; align-items: center; gap: 6px; padding-right: 12px; }

  .ribbon { display: flex; flex: none; height: 185px; border-bottom: 2px solid #8a8a8a; background: #e6e6e6; color: #333; line-height: 30px; }
  .group { display: flex; flex-direction: column; }
  .group, .folded { border-right: 2px solid transparent; border-image: linear-gradient(transparent 5px, #c6c6c6 5px 179px, transparent 179px) 1; }
  .tools { display: flex; gap: 24px; height: 150px; padding: 5px 16px 0; }
  .tools.center { justify-content: center; padding: 5px 24px 0; }
  .tools.code-tools { padding: 5px 18px 0; }
  .group h3 { padding: 0 8px; font-size: 24px; line-height: 36px; text-align: center; color: #666; }
  .big { display: flex; flex-direction: column; align-items: center; min-width: 56px; padding-top: 13px; }
  .big.wide { min-width: 118px; }
  .big .ic { margin-bottom: 16px; }
  .big span { height: 30px; }
  .big .drop { display: flex; align-items: center; }
  .stack.mid { padding-top: 25px; }
  .small, .pair { display: flex; align-items: center; gap: 8px; height: 48px; }
  .pair { gap: 16px; }
  .small .split { padding-left: 8px; }
  .edit { display: grid; grid-template-columns: 82px 32px 32px 32px 16px; gap: 0 16px; grid-auto-rows: 48px; align-items: center; color: #000; }
  .edit span { text-align: right; }
  .folded { display: flex; flex-direction: column; align-items: center; padding: 77px 5px 0; font-size: 24px; color: #555; }
  .folded svg { width: 24px; height: 12px; margin-top: 36px; fill: #000; }
  .collapse { margin-left: auto; align-self: flex-end; padding: 0 14px 12px; fill: #8c8c8c; }
  .collapse svg { width: 22px; height: 22px; }
  .editor .collapse { padding-right: 16px; }

  .codearea { display: flex; flex: 1; min-height: 0; background: linear-gradient(90deg, #ececec 44px, #fff 44px 46px, #ececec 46px 68px, #fff 68px 1326px, #cacaca 1326px 1328px, #fff 1328px); }
  .code { flex: 1; min-width: 0; margin: 0; padding: 1px 0 0; list-style: none; font-family: 'DejaVu Sans Mono', 'Noto Sans CJK KR', monospace; font-size: 27px; line-height: 34px; }
  .code li { display: flex; height: 34px; }
  .num { width: 39px; text-align: right; font-size: 24px; color: #333; }
  .dash { width: 29px; padding-right: 5px; text-align: right; color: #333; }
  .code code { padding-left: 58px; font: inherit; white-space: pre; }
  .comment { color: #3a7a3a; }
  .string { color: #a020f0; }
  .hangul { font-size: 24px; }
  .marks { width: 31px; border-left: 2px solid #ccc; background: #ededed; padding: 2px 0 0 3px; }
  .marks i { display: block; height: 22px; border: 2px solid #5a8a5a; background: #7fd67f; }
  .statusbar { flex: none; height: 44px; background: #ececec; }

  .address { display: flex; flex: none; align-items: center; gap: 20px; height: 48px; padding: 0 8px 0 10px; background: #efefef; font-size: 26px; line-height: 38px; }
  .path { display: flex; flex: 1; align-items: center; gap: 19px; height: 42px; margin-left: -6px; padding: 0 8px 0 4px; border: 2px solid #bcbcbc; background: #fff; }
  .path a { color: #000; text-decoration: none; }
  .path a:first-of-type { margin-left: -6px; }
  .sep { width: 7px; height: 12px; }
  .pick { margin-left: auto; }
  .find { display: grid; place-items: center; width: 42px; height: 42px; margin-left: -20px; border: 2px solid #c0c4cc; border-radius: 0 6px 6px 0; background: linear-gradient(#f4f6fb, #d6dff0 60%, #e9eef8); }

  .panels { display: grid; grid-template-columns: 486px 1fr 417px; gap: 22px; flex: 1; min-height: 0; padding: 0 3px 0 2px; background: #ededed; }
  .panel { display: flex; flex-direction: column; min-width: 0; overflow: hidden; border: 2px solid #bcc9d6; background: #fff; }
  .panel > header { display: flex; flex: none; align-items: center; justify-content: space-between; height: 36px; padding: 0 16px 0 10px; border-bottom: 2px solid #ccc; background: #fafafa; color: #444; line-height: 32px; }
  .panel h3 { font-size: 24px; }
  .panel table { width: 100%; border-collapse: collapse; font-size: 26px; line-height: 34px; }
  .panel th { height: 32px; padding: 0; background: #f5f5f5; font-size: 20px; line-height: 30px; font-weight: 400; text-align: left; }
  .panel td { height: 34px; padding: 0; white-space: nowrap; }
  .up { display: inline-block; width: 14px; height: 12px; margin-left: 4px; fill: #777; }
  .files .pic { width: 79px; padding-left: 38px; }
  .files th.pic { padding-left: 42px; }
  .files th + th { padding-left: 8px; }
  .selected { background: #d4d4d4; }
  .command { display: flex; flex: 1; }
  .fxcol { width: 36px; padding: 46px 0 0 6px; border-top: 2px solid #ececec; background: #ececec; }
  .command pre { margin: 0; padding: 11px 8px; font-family: 'DejaVu Sans Mono', monospace; font-size: 27px; line-height: 34px; }
  .vars { flex: 1; border: solid #8c8c8c; border-width: 2px 2px 0; padding: 0 3px; overflow: hidden; }
  .panel .vars table { table-layout: fixed; }
  .c-icon { width: 38px; }
  .c-name { width: 222px; }
  .vars th[colspan] { padding-left: 6px; }
  .vars th { height: 34px; }
  .panel .vars .val { padding-left: 8px; overflow: hidden; }
  .vars td.val { color: #1c639c; font-style: italic; }

  .figure { position: relative; box-shadow: 0 0 1px 1px rgba(0, 0, 0, .25), 0 12px 32px rgba(0, 0, 0, .2); border-radius: 10px; }
  .figure.middle { z-index: 1; }
  .figure.front { z-index: 2; box-shadow: 0 0 1px 1px rgba(0, 0, 0, .3), 0 24px 70px rgba(0, 0, 0, .5); }
  .front .titlebar { background: linear-gradient(#e8e8e8, #cfcfcf); border-color: #b0b0b0; color: #444; }
  .figmenu { display: flex; flex: none; gap: 36px; height: 44px; padding: 0 8px 0 17px; border-bottom: 2px solid #b8b8b8; background: #fafafa; font-size: 26px; line-height: 42px; }
  .figmenu svg { width: 14px; height: 14px; margin: 14px 0 0 auto; }
  .plot { flex: 1; border-top: 3px solid #fff; padding-top: 79px; background: linear-gradient(#f0f0f0 1120px, #e0e0e0); font-family: 'Liberation Sans', sans-serif; line-height: 32px; color: #262626; }
  .plot h3 { height: 34px; padding-left: 46px; font-size: 24px; line-height: 32px; font-weight: 700; text-align: center; color: #000; }
  .axes { display: flex; padding: 0 114px 0 40px; }
  .ylabel { flex: none; width: 32px; height: 930px; writing-mode: vertical-rl; transform: rotate(180deg); text-align: center; font-size: 24px; font-weight: 700; }
  .matrix { flex: 1; width: 100%; min-width: 0; table-layout: fixed; border-spacing: 0; font-size: 22px; line-height: 26px; }
  .c-label { width: 84px; }
  .matrix th { padding: 0; font-weight: 400; }
  .matrix th[scope='row'] { padding-right: 10px; text-align: right; }
  .matrix tfoot td { padding: 0; }
  .matrix tbody td { height: 310px; padding: 0; border: solid #808080; border-width: 1px 0 0 1px; text-align: center; color: #000; }
  .matrix tbody td:last-child { border-left: 4px solid #404040; border-right: 1px solid #808080; }
  .matrix tbody tr:last-child td { border-top: 4px solid #404040; border-bottom: 1px solid #808080; }
  .matrix td b, .matrix td span { display: block; }
  .matrix .hit { background: #bde6c4; }
  .matrix .miss { background: #f9c4c0; }
  .matrix .rate b { font-weight: 400; color: #22ac3c; }
  .matrix .rate span { color: #e23d2e; }
  .matrix .total { background: #d9d9d9; }
  .matrix .total b, .matrix .total span { font-weight: 700; }
  .matrix tfoot th { height: 80px; padding-top: 6px; vertical-align: top; }
  .matrix tfoot div { width: calc(50% + 8px); text-align: right; }
  .matrix tfoot span { display: inline-block; transform: rotate(-45deg); transform-origin: 100% 50%; }
  .xlabel { display: block; padding-left: 42px; text-align: center; font-size: 24px; font-weight: 700; }

  .dockrow { display: flex; justify-content: center; height: 128px; }
  .dock { display: flex; gap: 8px; padding: 8px 6px 0; border: 3px solid #333; border-bottom: 0; border-radius: 10px 10px 0 0; background: #111; }
  .dock button { display: flex; flex-direction: column; align-items: center; gap: 8px; width: 96px; }
  .dock svg { width: 96px; height: 96px; }
  .dock .open::after { content: ''; width: 8px; height: 8px; border-radius: 50%; background: #999; }
  .rule { width: 2px; height: 96px; margin: 0 20px; background: #444; }
</style>
